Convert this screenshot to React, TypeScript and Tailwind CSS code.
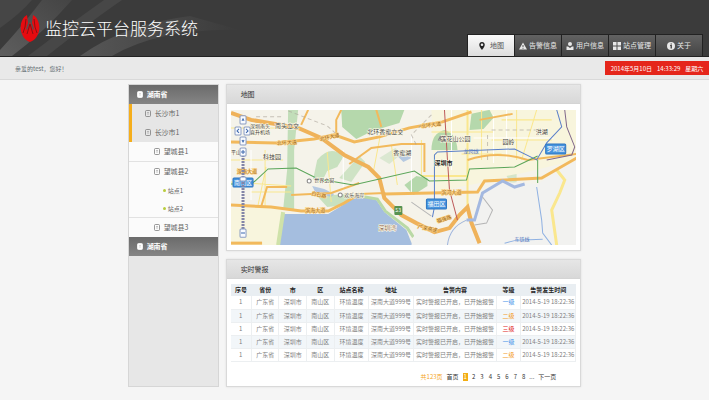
import React from "react";

const tabs = [
  { label: "地图", icon: "pin" },
  { label: "告警信息", icon: "alert" },
  { label: "用户信息", icon: "user" },
  { label: "站点管理", icon: "grid" },
  { label: "关于", icon: "info" },
];

const levels = [
  { text: "一级", tone: "text-[#3b8fe8]" },
  { text: "二级", tone: "text-[#f39a1e]" },
  { text: "三级", tone: "text-[#e01c1c]" },
  { text: "一级", tone: "text-[#3b8fe8]" },
  { text: "二级", tone: "text-[#f39a1e]" },
];

const columns = [
  { label: "序号", width: "w-[6%]" },
  { label: "省份", width: "w-[8%]" },
  { label: "市", width: "w-[8%]" },
  { label: "区", width: "w-[8%]" },
  { label: "站点名称", width: "w-[10%]" },
  { label: "地址", width: "w-[13%]" },
  { label: "告警内容", width: "w-[24%]" },
  { label: "等级", width: "w-[7%]" },
  { label: "告警发生时间", width: "w-[16%]" },
];

function TabIcon({ name }: { name: string }) {
  return (
    <svg viewBox="0 0 16 16" className="size-2 shrink-0" fill="currentColor" aria-hidden="true">
      {name === "pin" && (
        <path fillRule="evenodd" d="M8 0C4.700 0 2.500 2.400 2.500 5.500 2.500 9.500 8 16 8 16s5.500-6.500 5.500-10.500C13.500 2.400 11.300 0 8 0zm0 3a2.600 2.600 0 1 1 0 5.200A2.600 2.600 0 0 1 8 3z" />
      )}
      {name === "alert" && <path fillRule="evenodd" d="M8 1l8 14H0zM7 6v4h2V6zm0 5.500v2h2v-2z" />}
      {name === "user" && (
        <>
          <circle cx="8" cy="4" r="4" />
          <path d="M1 9h3l4 3 4-3h3v7H1z" />
        </>
      )}
      {name === "grid" && <path d="M0 0h7v7H0zM9 0h7v7H9zM0 9h7v7H0zM9 9h7v7H9z" />}
      {name === "info" && <path fillRule="evenodd" d="M8 0a8 8 0 1 1 0 16A8 8 0 0 1 8 0zM7 3v2h3V3zM6 6v2h1v5h3V6z" />}
    </svg>
  );
}

function Header() {
  return (
    <header className="grid h-[57px] border-b border-[#222] bg-[#3b3b3b]">
      <svg viewBox="0 0 240 56" preserveAspectRatio="xMinYMin slice" className="col-start-1 row-start-1 h-14 w-60" aria-hidden="true">
        <defs>
          <linearGradient id="streak" x1="0" y1="1" x2="1" y2="0">
            <stop offset="0" stopColor="#5e5e5e" />
            <stop offset="1" stopColor="#444" />
          </linearGradient>
          <linearGradient id="streakFade" x1="0" y1="0" x2="1" y2="0">
            <stop offset="0" stopColor="#565656" />
            <stop offset="1" stopColor="#3b3b3b" />
          </linearGradient>
        </defs>
        <path d="M0 50Q24 24 42 0h30Q44 32 12 56H0z" fill="url(#streak)" />
        <path d="M28 56Q70 24 104 0h18Q90 22 47 56z" fill="#474747" />
        <path d="M80 56Q125 24 190 16L240 30Q160 28 112 56z" fill="url(#streakFade)" />
        <path d="M0 0h32Q20 14 0 28z" fill="#464646" />
      </svg>
      <div className="col-start-1 row-start-1 flex items-end justify-between pr-[6px] pl-5">
        <div className="flex h-full items-center gap-[5px]">
          <svg viewBox="0 0 20 28" className="h-7 w-5" aria-hidden="true">
            <path d="M7 1C1 4-1 14 2 20c2 5 5 7 8 8 3-1 6-3 8-8 3-6 1-16-5-19l-1 8 2 6-1 1-3-8-3 8-1-1 2-6z" fill="#e60b10" />
            <path d="M6 5L5 13 3 19M14 5l1 8 2 6M10 10L7 20M10 10l3 10" fill="none" stroke="#8a1013" strokeWidth="1" />
          </svg>
          <h1 className="text-[17px] leading-6 font-light text-white">监控云平台服务系统</h1>
        </div>
        <nav className="flex gap-px border border-b-0 border-[#222] bg-[#222]">
          {tabs.map((tab, i) => (
            <button
              key={tab.label}
              type="button"
              className={
                i === 0
                  ? "flex h-[21px] w-[46px] items-center justify-center gap-1 bg-gradient-to-b from-[#fafafa] to-[#dedede] text-[7px] text-[#555] [&>svg]:text-[#222]"
                  : "flex h-[21px] w-[46px] items-center justify-center gap-[2px] bg-gradient-to-b from-[#626262] to-[#444] text-[7px] text-[#e8e8e8]"
              }
            >
              <TabIcon name={tab.icon} />
              <span>{tab.label}</span>
            </button>
          ))}
        </nav>
      </div>
    </header>
  );
}

function NodeIcon({ solid = false }: { solid?: boolean }) {
  return (
    <svg viewBox="0 0 12 14" className="h-[7px] w-[6px] shrink-0" aria-hidden="true">
      <rect x="1" y="1" width="10" height="12" rx="2" fill={solid ? "#fff" : "none"} stroke={solid ? "#fff" : "#777"} strokeWidth="1.500" />
      <path d="M4 5h4M4 8h4" stroke={solid ? "#bbb" : "#888"} strokeWidth="1" />
    </svg>
  );
}

function SideHead({ label }: { label: string }) {
  return (
    <button type="button" className="flex h-[19px] w-full items-center gap-1 bg-gradient-to-b from-[#6b6b6b] to-[#858585] pl-2 text-[7px] font-bold text-white">
      <NodeIcon solid />
      {label}
    </button>
  );
}

function Sidebar() {
  const row = "flex h-[19px] items-center gap-1 text-[7px] text-[#666]";
  return (
    <aside className="w-[91px] shrink-0 border border-[#d6d6d6] bg-[#e7e7e7]">
      <SideHead label="湖南省" />
      <ul className="border-l-[3px] border-[#f5ae1c] bg-[#e6e6e6] pl-[13px]">
        <li><a href="#city-1" className={row}><NodeIcon />长沙市1</a></li>
        <li><a href="#city-2" className={row}><NodeIcon />长沙市1</a></li>
      </ul>
      <ul className="bg-[#fbfbfb]">
        <li className="border-b border-[#e2e2e2]"><a href="#county-1" className={row + " pl-[25px]"}><NodeIcon />望城县1</a></li>
        <li className="border-b border-[#e2e2e2]">
          <a href="#county-2" className={row + " pl-[25px]"}><NodeIcon />望城县2</a>
          <ul className="pl-[34px] text-[6px] text-[#666]">
            {["站点1", "站点2"].map((site) => (
              <li key={site}>
                <a href="#site" className="flex h-[18px] items-center gap-[2px]">
                  <span className="size-[3px] rounded-full bg-[#b8cc3c]" />
                  {site}
                </a>
              </li>
            ))}
          </ul>
        </li>
        <li><a href="#county-3" className={row + " pl-[25px]"}><NodeIcon />望城县3</a></li>
      </ul>
      <SideHead label="湖南省" />
    </aside>
  );
}

function Panel({ title, children }: { title: string; children: React.ReactNode }) {
  return (
    <section className="border border-[#d9d9d9] bg-white shadow-[0_0_2px_#ddd]">
      <h2 className="h-[19px] border-b border-[#d4d4d4] bg-gradient-to-b from-[#e6e6e6] to-[#d8d8d8] pl-[14px] text-[7px] leading-[19px] text-[#333]">{title}</h2>
      {children}
    </section>
  );
}

function MapView() {
  return (
    <svg viewBox="0 0 345 135" preserveAspectRatio="xMidYMid slice" className="h-[135px] w-full" role="img" aria-label="地图">
      <rect width="345" height="135" fill="#f5f3ea" />
      <path d="M0 98h52l-4 37H0zM200 0h145v50l-92 22-50 10z" fill="#f8f5dd" />
      {/* parks */}
      <g fill="#b5d8ac">
        <path d="M110 0h63l-5 13-27 8-16 8-14-12z" />
        <path d="M57 0h10l-4 40v60H52l4-40z" opacity=".8" />
        <path d="M200 40q0-17 13-20 12 3 13 20z" />
        <path d="M173 75l12-9 11 2v8l-14 9z" />
        <path d="M86 50q14-16 26-3l-6 10-10 4-6 12-8-4z" opacity=".7" />
        <path d="M108 68l20-22 6 6-14 20z" opacity=".6" />
        <path d="M86 86l32-2 10 3-12 8-20 2z" opacity=".7" />
        <path d="M240 4l18-4 4 8-10 11-14 1z" />
        <path d="M275 66l10-2 0 8-6 2z" opacity=".5" />
        <path d="M148 48l16-10 6 6-12 10z" opacity=".4" />
      </g>
      {/* bay and lakes */}
      <g fill="#a5bedf">
        <path d="M48 135l5-31h44l18-11 12-7 18 4 8 12 22 18 6 15z" />
        <path d="M81 76l12 3 10 5-3 3-16-5zM166 46l10-2 4 4-8 4z" opacity=".8" />
      </g>
      <path d="M47 135l5-33" stroke="#cfe2a9" strokeWidth="4" />
      <path d="M128 86l18 3 8 12 22 17 6 9" fill="none" stroke="#b9d9a6" strokeWidth="3" />
      {/* land south of the river */}
      <path d="M180 135l5-18 18 7 32-12 8-2 8-26 20-12 35 2 39-24v85z" fill="#f2f2f0" />
      {/* minor streets */}
      <g fill="none" stroke="#fae78e" strokeWidth="1">
        <path d="M0 18h54M0 50h52M34 40v56M27 95l8-38M96 42l4 50M150 20l-8 42M250 0v50M285 0v50M200 22h62M0 72l60 4M20 82h40M305 0l-15 50M230 44h40M190 30v35M160 35l6 40M270 10h50M260 30h60" />
        <path d="M325 60l8 10-5 13-8 17 5 35" strokeWidth="3" />
        <path d="M236 0v97M190 66h46" strokeWidth="2" />
      </g>
      <g fill="none" stroke="#fff" strokeWidth="1">
        <path d="M10 15v75M20 40v50M112 40v40M220 0v60M262 5v48M275 0v50M242 28h80M180 25v60" />
      </g>
      {/* trunk roads */}
      <g fill="none" stroke="#f2b95c" strokeWidth="2">
        <path d="M70 15l7-15M105 25V10l5-10M145 0l5 17M118 54l22-16 30-4h23v28M60 85l40-2 28-10M30 97l6-20h20M236 50q30-10 60 0l49-6M248 10l33-6M128 84l26-1" />
        <path d="M0 32l45 1 38-4 20-4 20 7 25-5 30-9 33-6 29-10" strokeWidth="3" />
        <path d="M0 95l40 2 30 4h27l16-8 15-9M153 84l93-2 7-11 57-3 35-20" strokeWidth="3" />
        <path d="M0 3l20 7 47 8 23 10 23 17 24 12 11 11 5 20 17 17 15 8 18 9 15-4 10-13 8-8 4 16 8 20" strokeWidth="4" stroke="#efb25a" />
        <path d="M0 133h31" strokeWidth="3" />
      </g>
      {/* metro lines */}
      <g fill="none" strokeWidth="1">
        <path d="M0 74h20l4-3 13-12 28-1 22 11 35 6 61-14 15 10 37-1 3-11 45-2 23-11M306 50v23" stroke="#5aa559" />
        <path d="M213 0l3 50 2 30 8 30" stroke="#bd5a5a" />
        <path d="M201 107l2-10V45l3-3 77-3 22 11 10-17 15-16-5-17" stroke="#5a7fc9" />
        <path d="M333 0l2 17 8 20-3 8-25 5" stroke="#80688b" />
      </g>
      {/* river */}
      <path d="M216 135q2-18 19-25" fill="none" stroke="#9eb4dc" strokeWidth="1" />
      <path d="M235 110h8l8-27 20-12 12 6 10-3" fill="none" stroke="#a3b8e0" strokeWidth="3" />
      <path d="M305 77l5 33 1 13 9 12M273 133l12-3 26-1" fill="none" stroke="#8fb1e2" strokeWidth="1" />
      <path d="M251 87l10 13-6 13-12 2M180 92l20 14" fill="none" stroke="#b5b5b5" strokeWidth="1" />
      <g stroke="#a9a096" strokeWidth="1" strokeDasharray="4 3" fill="none">
        <path d="M25 7h28M57 1l39 15 9 8M200 5l-20 20 6 12M260 20h45M256 50V25" opacity=".6" />
      </g>
      {/* place names */}
      <g fontSize="6" fill="#444" stroke="#fffbe8" strokeWidth="1" paintOrder="stroke">
        <text x="44" y="18">南头立交</text>
        <text x="19" y="18" fontSize="5">深圳南头</text>
        <text x="19" y="24" fontSize="5">直升机场</text>
        <text x="136" y="24">北环香蜜立交</text>
        <text x="32" y="49">科技园</text>
        <text x="162" y="45">香蜜湖</text>
        <text x="0" y="44" fontSize="5">平山村</text>
        <text x="203" y="55" fontWeight="bold" fill="#222">深圳市</text>
        <text x="209" y="31">莲花山公园</text>
        <text x="271" y="34">园岭</text>
        <text x="304" y="24">洪湖</text>
        <text x="83" y="72" fontSize="5">世界之窗</text>
        <text x="113" y="87" fontSize="5">欢乐海岸</text>
        <text x="147" y="120" fill="#8d6c56">深圳湾</text>
      </g>
      <g fontSize="5" fill="#9b6615" stroke="#ffd68c" strokeWidth="1" paintOrder="stroke">
        <text x="46" y="35" transform="rotate(-3 46 35)">北环大道</text>
        <text x="89" y="31" transform="rotate(-12 89 31)">北环大道</text>
        <text x="190" y="18" transform="rotate(-7 190 18)">北环大道</text>
        <text x="74" y="102">滨海大道</text>
        <text x="210" y="84">滨河大道</text>
        <text x="6" y="63">深南大道</text>
        <text x="80" y="85" transform="rotate(12 80 85)">白石路</text>
        <text x="186" y="118" transform="rotate(12 186 118)">广深高速</text>
        <text x="206" y="113" transform="rotate(-18 206 113)">福强路</text>
      </g>
      <g fontSize="5" fill="#5478bd">
        <text x="232" y="43">龙岗线</text>
        <text x="283" y="131">东铁线</text>
      </g>
      <g fill="#fff" stroke="#888" strokeWidth="1">
        <circle cx="78" cy="71" r="2" /><circle cx="109" cy="85" r="2" /><path d="M209 26v4h-2z" />
      </g>
      {/* district badges */}
      <g fill="#4693dd" stroke="#2d76c2" strokeWidth="1">
        <rect x="2" y="68" width="20" height="9" rx="1" />
        <rect x="195" y="89" width="20" height="10" rx="1" />
        <rect x="314" y="34" width="20" height="10" rx="1" />
      </g>
      <g fontSize="6" fill="#fff">
        <text x="3" y="75">南山区</text>
        <text x="196" y="96">福田区</text>
        <text x="315" y="41">罗湖区</text>
      </g>
      <rect x="163" y="96" width="8" height="9" rx="1" fill="#579250" />
      <text x="164" y="102" fontSize="5" fill="#fff">S3</text>
      {/* pan and zoom controls */}
      <path d="M12 39v82" stroke="#8385a7" strokeWidth="3" strokeDasharray="2 1" />
      <g fill="#f9fbff" stroke="#8a9cc2" strokeWidth="1">
        <rect x="9" y="6" width="6" height="8" rx="1" />
        <rect x="4" y="17" width="6" height="8" rx="1" />
        <rect x="13" y="17" width="6" height="8" rx="1" />
        <rect x="9" y="27" width="6" height="8" rx="1" />
        <rect x="9" y="38" width="6" height="8" rx="1" />
        <rect x="9" y="67" width="6" height="4" rx="1" />
        <rect x="9" y="119" width="6" height="8" rx="1" />
      </g>
      <path d="M11 11l1-2 1 2M8 19l-2 2 2 2M15 19l2 2-2 2M11 30l1 2 1-2M10 42h4M12 40v4M10 123h4" fill="none" stroke="#3d68ad" strokeWidth="1" />
    </svg>
  );
}

function AlarmTable() {
  return (
    <table className="w-full table-fixed border-collapse text-center text-[6px] leading-[8px] text-[#808080]">
      <thead>
        <tr className="h-[12px] bg-[#e9eef2] text-[#222]">
          {columns.map((c) => (
            <th key={c.label} className={c.width + " p-0 font-bold whitespace-nowrap"}>{c.label}</th>
          ))}
        </tr>
      </thead>
      <tbody>
        {levels.map((level, i) => (
          <tr key={i} className="h-[13px] border-b border-[#eceff1] even:bg-[#f2f6f9] [&>td]:border-r [&>td]:border-[#eceff1] [&>td]:p-0 [&>td]:whitespace-nowrap">
            <td>1</td>
            <td>广东省</td>
            <td>深圳市</td>
            <td>南山区</td>
            <td>环境温度</td>
            <td>深南大道999号</td>
            <td>实时警报已开启，已开始报警</td>
            <td className={level.tone}>{level.text}</td>
            <td>2014-5-19 18:22:36</td>
          </tr>
        ))}
      </tbody>
    </table>
  );
}

function Pagination() {
  return (
    <nav className="flex h-[8px] items-center justify-end gap-1 pr-5 text-[6px] leading-[8px] text-[#333]">
      <span className="text-[#f5a623]">共123页</span>
      <a href="#first">首页</a>
      <a href="#p1" className="bg-[#f3ae13] px-px text-white">1</a>
      <span className="flex gap-[5px]">
        {["2", "3", "4", "5", "6", "7", "8"].map((n) => (
          <a key={n} href="#page">{n}</a>
        ))}
      </span>
      <span>...</span>
      <a href="#next">下一页</a>
    </nav>
  );
}

export default function App() {
  return (
    <div className="min-h-screen bg-[#f5f5f5] font-['Noto_Sans_CJK_SC','Liberation_Sans',sans-serif]">
      <Header />
      <div className="flex h-[23px] items-center justify-between border-b border-[#d9d9d9] bg-[#e9e9e9] pl-[15px] text-[6px] text-[#5f6b70]">
        <p>亲爱的test，您好！</p>
        <p className="flex h-[14px] w-[104px] items-center justify-center gap-[5px] bg-[#e5261b] text-white">
          <span>2014年5月10日</span>
          <span>14:33:29</span>
          <span>星期六</span>
        </p>
      </div>
      <main className="mx-auto flex w-[64%] min-w-[452px] gap-[7px] pt-1">
        <Sidebar />
        <div className="flex min-w-0 flex-1 flex-col gap-2">
          <Panel title="地图">
            <div className="px-1 pt-[6px] pb-[5px]">
              <MapView />
            </div>
          </Panel>
          <Panel title="实时警报">
            <div className="px-1 pt-[5px] pb-[5px]">
              <AlarmTable />
              <div className="pt-[11px]">
                <Pagination />
              </div>
            </div>
          </Panel>
        </div>
      </main>
    </div>
  );
}
